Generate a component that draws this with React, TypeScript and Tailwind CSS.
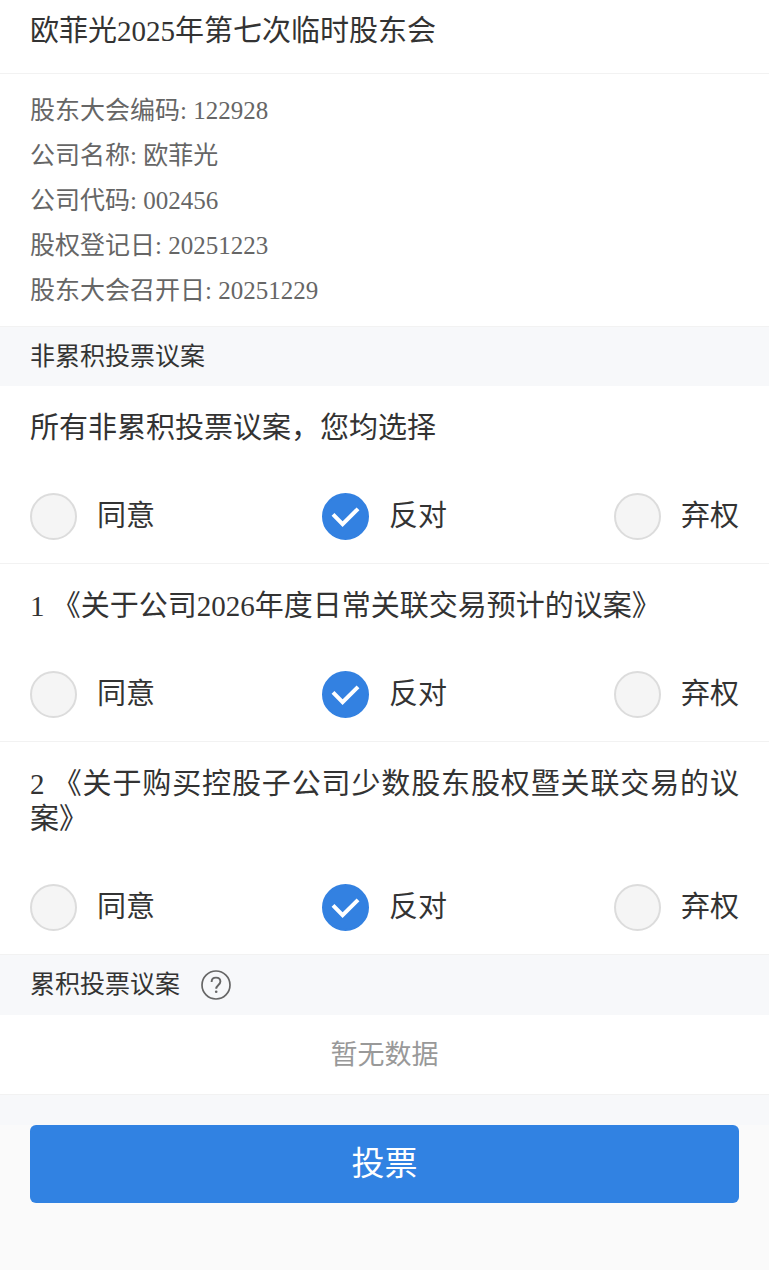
import { useState } from 'react';

type Choice = 'agree' | 'against' | 'abstain';

const CHOICES: { value: Choice; label: string }[] = [
  { value: 'agree', label: '同意' },
  { value: 'against', label: '反对' },
  { value: 'abstain', label: '弃权' },
];

const DETAILS = [
  { label: '股东大会编码', value: '122928' },
  { label: '公司名称', value: '欧菲光' },
  { label: '公司代码', value: '002456' },
  { label: '股权登记日', value: '20251223' },
  { label: '股东大会召开日', value: '20251229' },
];

const PROPOSALS = [
  '1 《关于公司2026年度日常关联交易预计的议案》',
  '2 《关于购买控股子公司少数股东股权暨关联交易的议案》',
];

function ChoiceRadio({
  name,
  label,
  checked,
  onSelect,
}: {
  name: string;
  label: string;
  checked: boolean;
  onSelect: () => void;
}) {
  return (
    <label className="flex cursor-pointer items-center gap-5">
      <span className="grid size-[47px] place-items-center">
        <input
          type="radio"
          name={name}
          checked={checked}
          onChange={onSelect}
          className="col-start-1 row-start-1 size-[47px] cursor-pointer appearance-none rounded-full border-2 border-[#dcdcdc] bg-[#f5f5f5] checked:border-[#3381e1] checked:bg-[#3381e1]"
        />
        {checked && (
          <svg
            viewBox="0 0 47 47"
            aria-hidden="true"
            className="pointer-events-none col-start-1 row-start-1 size-[47px] fill-none stroke-white"
          >
            <path d="M11 21.4 20.6 31.2 36 15.8" strokeWidth="4" />
          </svg>
        )}
      </span>
      <span className="text-[29px] leading-[35px]">{label}</span>
    </label>
  );
}

function Question({
  name,
  title,
  value,
  onChange,
}: {
  name: string;
  title: string;
  value: Choice | null;
  onChange: (choice: Choice) => void;
}) {
  return (
    <section
      role="radiogroup"
      aria-labelledby={`${name}-title`}
      className="border-b border-[#f2f2f2] bg-white px-[30px] pt-[25px] pb-[23px] last:border-b-0"
    >
      <h3 id={`${name}-title`} className="text-justify text-[29px] leading-[35px]">
        {title}
      </h3>
      <div className="mt-[47px] flex justify-between">
        {CHOICES.map((choice) => (
          <ChoiceRadio
            key={choice.value}
            name={name}
            label={choice.label}
            checked={value === choice.value}
            onSelect={() => onChange(choice.value)}
          />
        ))}
      </div>
    </section>
  );
}

export default function App() {
  const [votes, setVotes] = useState<Choice[]>(PROPOSALS.map(() => 'against'));
  const common = votes.every((vote) => vote === votes[0]) ? votes[0] : null;

  return (
    <main
      lang="zh-CN"
      className="min-h-screen bg-[#fafafa] font-['Liberation_Serif','Noto_Sans_CJK_SC',sans-serif] text-[#333333]"
    >
      <header className="border-b border-[#f2f2f2] bg-white px-[30px] pt-[11px] pb-[22px]">
        <h1 className="text-[29px] leading-10">欧菲光2025年第七次临时股东会</h1>
      </header>

      <ul className="bg-white px-[30px] pt-3.5 pb-[13px] text-[25px] leading-[45px] text-[#666666]">
        {DETAILS.map((detail) => (
          <li key={detail.label}>
            {detail.label}: {detail.value}
          </li>
        ))}
      </ul>

      <div className="border-t border-[#f2f2f2] bg-[#f7f8fa] px-[30px] pt-[10px] pb-[9px]">
        <h2 className="text-[25px] leading-10">非累积投票议案</h2>
      </div>

      <div>
        <Question
          name="all"
          title="所有非累积投票议案，您均选择"
          value={common}
          onChange={(choice) => setVotes(PROPOSALS.map(() => choice))}
        />
        {PROPOSALS.map((title, index) => (
          <Question
            key={title}
            name={`proposal-${index + 1}`}
            title={title}
            value={votes[index]}
            onChange={(choice) =>
              setVotes(votes.map((vote, i) => (i === index ? choice : vote)))
            }
          />
        ))}
      </div>

      <div className="flex items-center gap-5 border-t border-[#f2f2f2] bg-[#f7f8fa] px-[30px] py-[10px]">
        <h2 className="text-[25px] leading-10">累积投票议案</h2>
        <button type="button" aria-label="累积投票说明" className="cursor-pointer">
          <svg
            viewBox="0 0 32 32"
            aria-hidden="true"
            className="size-8 fill-none stroke-[#666666]"
          >
            <circle cx="16" cy="16" r="14" strokeWidth="1.7" />
            <path
              d="M11.6 13c0-2.7 1.8-4.4 4.4-4.4s4.4 1.7 4.4 4c0 3.2-4.2 3.6-4.2 7.2"
              strokeWidth="1.9"
            />
            <circle cx="16.2" cy="22.8" r="1.3" className="fill-[#666666] stroke-none" />
          </svg>
        </button>
      </div>

      <p className="border-b border-[#f2f2f2] bg-white pt-5 pb-[19px] text-center text-[27px] leading-10 text-[#999999]">
        暂无数据
      </p>

      <div className="h-[30px] bg-[#f7f8fa]" />
      <div className="px-[30px] pb-16">
        <button
          type="button"
          className="w-full cursor-pointer rounded-md bg-[#3182e2] py-[15px] text-[33px] leading-[48px] text-white"
        >
          投票
        </button>
      </div>
    </main>
  );
}
